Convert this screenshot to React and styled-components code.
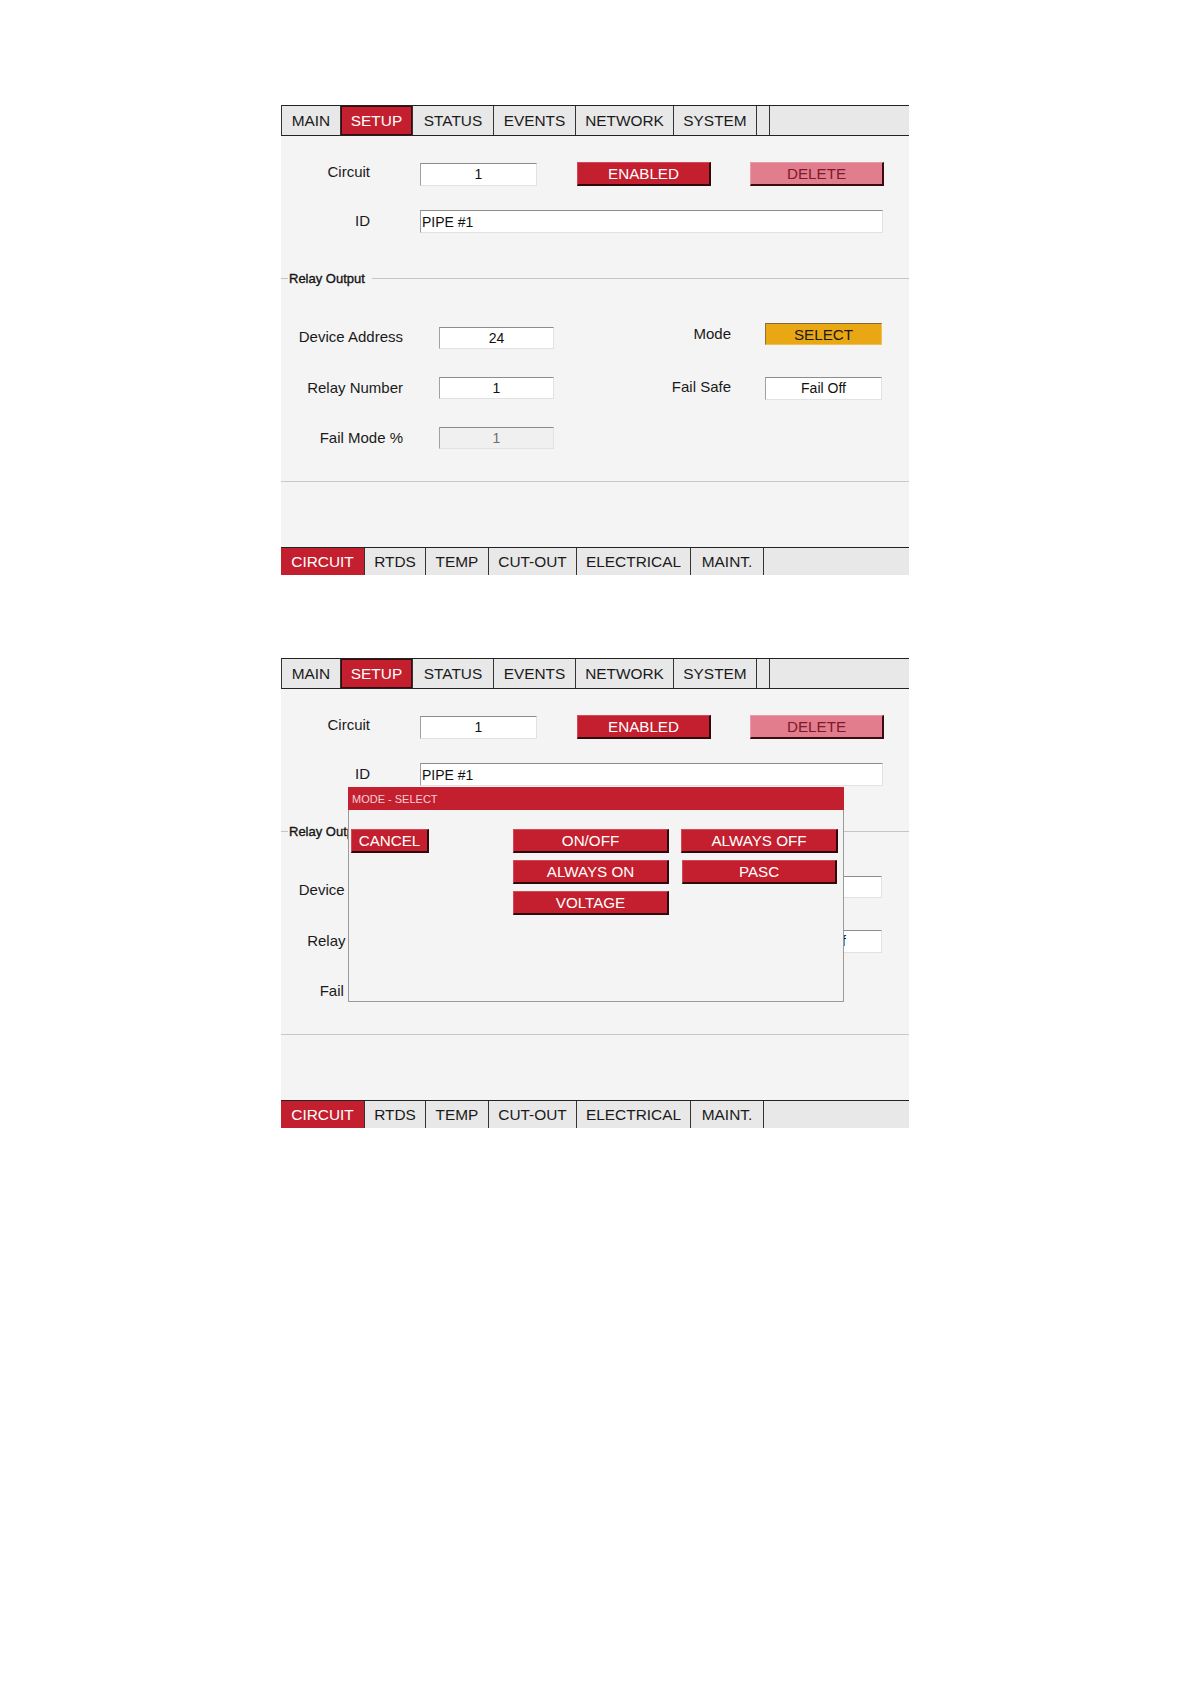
import React from "react";
import styled, { createGlobalStyle, css } from "styled-components";

const GlobalStyle = createGlobalStyle`
  html, body { margin: 0; padding: 0; background: #ffffff; }
  body { font-family: "Liberation Sans", Arial, Helvetica, sans-serif; color: #1a1a1a; }
  * { box-sizing: border-box; }
`;

const RED = "#c41f2e";

const Page = styled.div`
  display: flex;
  flex-direction: column;
  gap: 83px;
  padding: 105px 0 0 281px;
`;

const Panel = styled.div`
  position: relative;
  width: 628px;
  height: 470px;
  display: flex;
  flex-direction: column;
  background: #f4f4f4;
`;

const TabBar = styled.div`
  display: flex;
  height: ${(p) => (p.$bottom ? "28px" : "31px")};
  background: #e8e8e8;
  border-top: 1px solid #222;
  border-bottom: ${(p) => (p.$bottom ? "none" : "1px solid #222")};
  border-left: ${(p) => (p.$bottom ? "none" : "1px solid #333")};
  flex: none;
`;

const Tab = styled.div`
  width: ${(p) => p.$w}px;
  flex: none;
  display: flex;
  align-items: center;
  justify-content: center;
  font-size: 15.4px;
  color: #1a1a1a;
  border-right: 1px solid #333;
  white-space: nowrap;
  ${(p) =>
    p.$active &&
    css`
      background: ${RED};
      color: #ffffff;
    `}
  ${(p) =>
    p.$active &&
    p.$outlined &&
    css`
      box-shadow: inset 0 0 0 1px #3a0a0e;
    `}
`;

const Body = styled.div`
  flex: 1;
  display: flex;
  flex-direction: column;
`;

const Row = styled.div`
  display: flex;
  align-items: center;
  margin-top: ${(p) => p.$mt}px;
  height: ${(p) => p.$h}px;
`;

const Label = styled.div`
  width: ${(p) => p.$w}px;
  flex: none;
  text-align: right;
  font-size: 15px;
  color: #1a1a1a;
  padding-bottom: ${(p) => p.$lift || 0}px;
  margin-right: ${(p) => p.$gap}px;
  white-space: nowrap;
`;

const Field = styled.div`
  width: ${(p) => p.$w}px;
  height: ${(p) => p.$h || 22}px;
  flex: none;
  display: flex;
  align-items: center;
  justify-content: ${(p) => (p.$left ? "flex-start" : "center")};
  padding-left: ${(p) => (p.$left ? "1px" : "0")};
  font-size: 14px;
  background: ${(p) => (p.$disabled ? "#f0f0f0" : "#ffffff")};
  color: ${(p) => (p.$disabled ? "#6e6e6e" : "#111111")};
  border-top: 1px solid #8c8c8c;
  border-left: 1px solid #a0a0a0;
  border-right: 1px solid #e2e2e2;
  border-bottom: 1px solid #e2e2e2;
  margin-left: ${(p) => p.$ml || 0}px;
  white-space: nowrap;
  overflow: hidden;
`;

const variants = {
  red: css`
    background: ${RED};
    color: #ffffff;
    border-top: 1px solid #d4485a;
    border-left: 1px solid #d4485a;
    border-right: 2px solid #2e080c;
    border-bottom: 2px solid #2e080c;
  `,
  pink: css`
    background: #e27d8e;
    color: #7a1a2a;
    border-top: 1px solid #e89aa6;
    border-left: 1px solid #e89aa6;
    border-right: 2px solid #3a0c12;
    border-bottom: 2px solid #3a0c12;
  `,
  amber: css`
    background: #e9a813;
    color: #1a1a1a;
    border-top: 1px solid #7d6a3c;
    border-left: 1px solid #8a7540;
    border-right: 1px solid #f0c050;
    border-bottom: 1px solid #f0c050;
  `,
};

const Button = styled.div`
  width: ${(p) => p.$w}px;
  height: ${(p) => p.$h || 24}px;
  flex: none;
  display: flex;
  align-items: center;
  justify-content: center;
  font-size: 15.2px;
  margin-left: ${(p) => p.$ml || 0}px;
  white-space: nowrap;
  ${(p) => variants[p.$v || "red"]}
`;

const Legend = styled.div`
  display: flex;
  align-items: center;
  height: 16px;
  margin-top: 37px;
  font-size: 13px;
  color: #151515;
  -webkit-text-stroke: 0.35px #151515;
  &::before {
    content: "";
    width: 7px;
    height: 1px;
    background: #c4c4c4;
    margin-right: 1px;
  }
  &::after {
    content: "";
    flex: 1;
    height: 1px;
    background: #c4c4c4;
    margin-left: 7px;
  }
`;

const RelayGrid = styled.div`
  display: flex;
`;

const Column = styled.div`
  display: flex;
  flex-direction: column;
  gap: ${(p) => p.$gap}px;
  padding-top: ${(p) => p.$pt}px;
`;

const ColRow = styled.div`
  display: flex;
  align-items: center;
  height: 22px;
`;

const Separator = styled.div`
  height: 1px;
  background: #c8c8c8;
  margin-top: 32px;
`;

const Spacer = styled.div`
  flex: 1;
`;

const Modal = styled.div`
  position: absolute;
  top: 129px;
  left: 67px;
  width: 496px;
  height: 215px;
  background: #f4f4f4;
  border-left: 1px solid #9a9a9a;
  border-right: 1px solid #9a9a9a;
  border-bottom: 1px solid #9a9a9a;
  display: flex;
  flex-direction: column;
  z-index: 2;
`;

const ModalTitle = styled.div`
  height: 23px;
  background: ${RED};
  color: #f4d2d6;
  font-size: 11px;
  display: flex;
  align-items: center;
  padding-left: 4px;
  margin: 0 -1px;
`;

const ModalBody = styled.div`
  display: flex;
  align-items: flex-start;
  padding: 19px 0 0 2px;
`;

const OptionGrid = styled.div`
  display: grid;
  grid-template-columns: 156px 157px;
  grid-auto-rows: 24px;
  column-gap: 12px;
  row-gap: 7px;
  margin-left: 84px;
`;

const topTabs = [
  ["MAIN", 59],
  ["SETUP", 72],
  ["STATUS", 81],
  ["EVENTS", 82],
  ["NETWORK", 98],
  ["SYSTEM", 83],
  ["", 13],
];

const bottomTabs = [
  ["CIRCUIT", 84],
  ["RTDS", 61],
  ["TEMP", 63],
  ["CUT-OUT", 88],
  ["ELECTRICAL", 114],
  ["MAINT.", 73],
];

function SetupPanel({ modeSelect, children }) {
  return (
    <Panel>
      <TabBar>
        {topTabs.map(([t, w], i) => (
          <Tab key={i} $w={w} $active={t === "SETUP"} $outlined>
            {t}
          </Tab>
        ))}
      </TabBar>
      <Body>
        <Row $mt={26} $h={24}>
          <Label $w={89} $gap={50} $lift={6}>
            Circuit
          </Label>
          <Field $w={117} $h={23}>1</Field>
          <Button $w={134} $ml={40}>ENABLED</Button>
          <Button $w={134} $ml={39} $v="pink">
            DELETE
          </Button>
        </Row>
        <Row $mt={24} $h={23}>
          <Label $w={89} $gap={50} $lift={2}>
            ID
          </Label>
          <Field $w={463} $h={23} $left>
            PIPE #1
          </Field>
        </Row>
        <Legend>Relay Output</Legend>
        <RelayGrid>
          <Column $pt={41} $gap={28}>
            <ColRow>
              <Label $w={122} $gap={36} $lift={4}>Device Address</Label>
              <Field $w={115}>24</Field>
            </ColRow>
            <ColRow>
              <Label $w={122} $gap={36} $lift={2}>Relay Number</Label>
              <Field $w={115}>1</Field>
            </ColRow>
            <ColRow>
              <Label $w={122} $gap={36} $lift={2}>Fail Mode %</Label>
              <Field $w={115} $disabled>1</Field>
            </ColRow>
          </Column>
          <Column $pt={37} $gap={32}>
            <ColRow>
              <Label $w={177} $gap={34} $lift={2}>Mode</Label>
              {modeSelect ? (
                <Button $w={117} $h={22} $v="amber">SELECT</Button>
              ) : (
                <Field $w={117}>Select</Field>
              )}
            </ColRow>
            <ColRow>
              <Label $w={177} $gap={34} $lift={3}>Fail Safe</Label>
              <Field $w={117} $h={23}>Fail Off</Field>
            </ColRow>
          </Column>
        </RelayGrid>
        <Separator />
        <Spacer />
      </Body>
      <TabBar $bottom>
        {bottomTabs.map(([t, w]) => (
          <Tab key={t} $w={w} $active={t === "CIRCUIT"}>
            {t}
          </Tab>
        ))}
      </TabBar>
      {children}
    </Panel>
  );
}

export default function App() {
  return (
    <>
      <GlobalStyle />
      <Page>
        <SetupPanel modeSelect />
        <SetupPanel>
          <Modal>
            <ModalTitle>MODE - SELECT</ModalTitle>
            <ModalBody>
              <Button $w={78}>CANCEL</Button>
              <OptionGrid>
                <Button $w={156}>ON/OFF</Button>
                <Button $w={157}>ALWAYS OFF</Button>
                <Button $w={156}>ALWAYS ON</Button>
                <Button $w={155} $ml={1}>PASC</Button>
                <Button $w={156}>VOLTAGE</Button>
              </OptionGrid>
            </ModalBody>
          </Modal>
        </SetupPanel>
      </Page>
    </>
  );
}
